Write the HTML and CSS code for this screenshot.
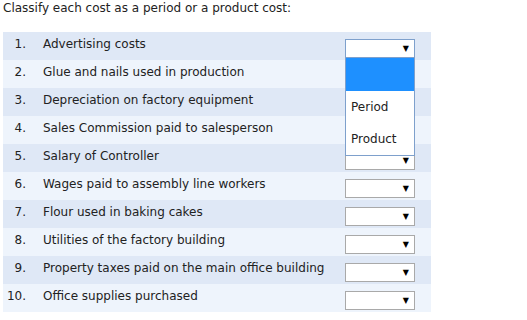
FILE: index.html
```html
<!DOCTYPE html>
<html lang="en">
<head>
    <meta charset="UTF-8">
    <title>Classify costs</title>
    <link rel="stylesheet" href="styles.css">
</head>
<body>
    <p class="prompt">Classify each cost as a period or a product cost:</p>
    <div class="list">
        <div class="row">
            <span class="num">1.</span>
            <span class="item">Advertising costs</span>
            <div class="pick open">
                <div class="box"><span class="arrow">&#9660;</span></div>
                <div class="menu">
                    <div class="opt active"></div>
                    <div class="opt">Period</div>
                    <div class="opt">Product</div>
                </div>
            </div>
        </div>
        <div class="row">
            <span class="num">2.</span>
            <span class="item">Glue and nails used in production</span>
            <div class="pick"><div class="box"><span class="arrow">&#9660;</span></div></div>
        </div>
        <div class="row">
            <span class="num">3.</span>
            <span class="item">Depreciation on factory equipment</span>
            <div class="pick"><div class="box"><span class="arrow">&#9660;</span></div></div>
        </div>
        <div class="row">
            <span class="num">4.</span>
            <span class="item">Sales Commission paid to salesperson</span>
            <div class="pick"><div class="box"><span class="arrow">&#9660;</span></div></div>
        </div>
        <div class="row">
            <span class="num">5.</span>
            <span class="item">Salary of Controller</span>
            <div class="pick"><div class="box"><span class="arrow">&#9660;</span></div></div>
        </div>
        <div class="row">
            <span class="num">6.</span>
            <span class="item">Wages paid to assembly line workers</span>
            <div class="pick"><div class="box"><span class="arrow">&#9660;</span></div></div>
        </div>
        <div class="row">
            <span class="num">7.</span>
            <span class="item">Flour used in baking cakes</span>
            <div class="pick"><div class="box"><span class="arrow">&#9660;</span></div></div>
        </div>
        <div class="row">
            <span class="num">8.</span>
            <span class="item">Utilities of the factory building</span>
            <div class="pick"><div class="box"><span class="arrow">&#9660;</span></div></div>
        </div>
        <div class="row">
            <span class="num">9.</span>
            <span class="item">Property taxes paid on the main office building</span>
            <div class="pick"><div class="box"><span class="arrow">&#9660;</span></div></div>
        </div>
        <div class="row">
            <span class="num">10.</span>
            <span class="item">Office supplies purchased</span>
            <div class="pick"><div class="box"><span class="arrow">&#9660;</span></div></div>
        </div>
    </div>
</body>
</html>
```

FILE: styles.css
```css
body {
    margin: 0;
    padding: 0 3px;
    background-color: #fff;
    font-family: "DejaVu Sans", Verdana, sans-serif;
    font-size: 12px;
    color: #222;
}
.prompt {
    margin: 1px 0 0;
    height: 31px;
    line-height: 15px;
}
.list {
    width: 428px;
}
.row {
    box-sizing: border-box;
    display: flex;
    align-items: center;
    height: 28px;
    padding-bottom: 4px;
    background-color: #dfe8f6;
}
.row:nth-child(even) {
    background-color: #eef4fc;
}
.num {
    width: 23px;
    text-align: right;
    flex-shrink: 0;
}
.item {
    margin-left: 17px;
    width: 302px;
    white-space: nowrap;
}
.pick {
    position: relative;
    align-self: flex-start;
    margin-top: 7px;
    width: 70px;
    height: 19px;
}
.box {
    box-sizing: border-box;
    height: 19px;
    background-color: #fff;
    border: 1px solid #a9a9a9;
    display: flex;
    justify-content: flex-end;
    align-items: center;
}
.open .box {
    border-color: #7ea0cc;
}
.arrow {
    font-size: 8px;
    color: #000;
    margin-right: 5px;
}
.menu {
    position: absolute;
    top: 18px;
    left: 0;
    z-index: 2;
    box-sizing: border-box;
    width: 70px;
    background-color: #fff;
    border: 1px solid #7ea0cc;
}
.opt {
    height: 32px;
    line-height: 32px;
    padding-left: 5px;
}
.opt.active {
    background-color: #1e90ff;
    height: 33px;
}
```
